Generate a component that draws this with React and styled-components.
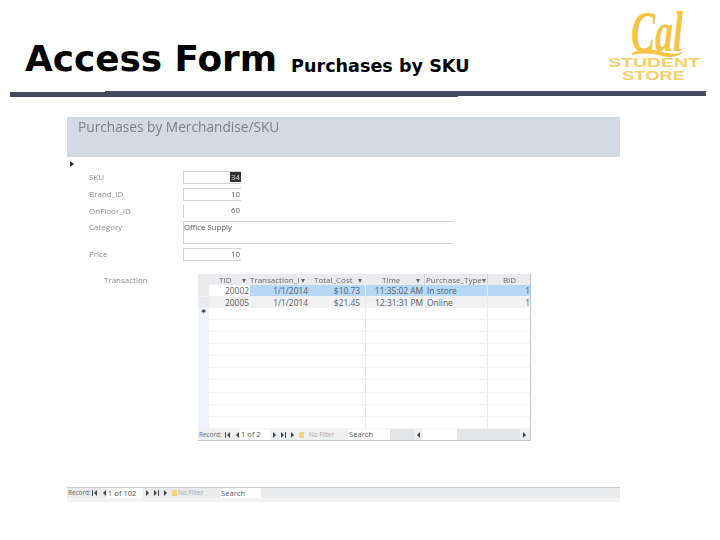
import React from "react";
import styled, { createGlobalStyle } from "styled-components";

const Global = createGlobalStyle`
  html, body { margin: 0; padding: 0; background: #fff; }
  #root { width: 720px; height: 540px; overflow: hidden; }
  * { box-sizing: border-box; }
`;
const Slide = styled.div`
  width: 720px; height: 540px; display: flex; flex-direction: column; background: #fff;
  font-family: "DejaVu Sans", sans-serif;
`;
const Header = styled.header`
  height: 91px; display: flex; align-items: flex-start; padding-left: 25px;
`;
const Title = styled.h1`
  margin: 36px 0 0; font: 700 35.8px/46px "DejaVu Sans", sans-serif; color: #000; white-space: nowrap;
`;
const Subtitle = styled.h2`
  margin: 55px 0 0 14px; font: 700 17.6px/22px "DejaVu Sans", sans-serif; color: #000; white-space: nowrap;
`;
const LogoBox = styled.svg`
  margin: 0 16px 0 auto; width: 100px; height: 91px; flex: none; overflow: visible;
`;
const Rule = styled.div`
  display: flex; align-items: flex-start; margin-left: 10px; width: 696px; height: 6px;
`;
const RuleSeg = styled.div`
  width: ${p => p.$w}px; height: ${p => p.$h}px; margin-top: ${p => p.$top}px; background: #434a62;
`;
const Form = styled.section`
  margin: 20px 0 0 67px; width: 553px; display: flex; flex-direction: column; filter: blur(0.4px);
`;
const FormHeader = styled.div`
  height: 40px; background: #d3dae4; padding: 1px 0 0 11px;
  font: 400 13.7px/18px "Open Sans", sans-serif; color: #7b7f86;
`;
const FormBody = styled.div`
  height: 330px; display: flex; flex-direction: column; padding: 4px 0 0 3px;
`;
const Selector = styled.div`
  width: 0; height: 0; border-left: 4px solid #222; border-top: 3px solid transparent; border-bottom: 3px solid transparent;
`;
const Fields = styled.div`
  margin-top: 4px; display: grid; grid-template-columns: 94px auto; justify-content: start; padding-left: 19px;
`;
const Label = styled.div`
  height: ${p => p.$h || 13}px; margin-bottom: ${p => p.$mb ?? 4}px;
  font: 400 8px/11px "Open Sans", sans-serif; color: #8a8a8a;
`;
const Input = styled.div`
  width: ${p => p.$w || 58}px; height: ${p => p.$h || 13}px; margin-bottom: ${p => p.$mb ?? 4}px;
  border: 1px solid #d2d2d2; border-right: none;
  ${p => p.$noEdge ? "border-top: none; border-bottom: none;" : ""}
  font: 400 7.8px/10px "Open Sans", sans-serif; color: #555; text-align: ${p => p.$left ? "left" : "right"};
  padding-right: 1px;
`;
const Selected = styled.span`
  background: #333; color: #ddd; display: inline-block; padding: 0 1px; margin-right: -1px;
`;
const SubRow = styled.div`
  display: flex; margin-top: 13px; padding-left: 34px;
`;
const SubLabel = styled.div`
  width: 94px; font: 400 8px/12px "Open Sans", sans-serif; color: #8b8b8b;
`;
const Sub = styled.div`
  width: 333px; height: 167px; display: flex; flex-direction: column; border-right: 1px solid #c4c4c4; border-bottom: 1px solid #c4c4c4;
`;
const COLS = "11px 41px 63px 53px 59px 63px 43px";
const HeadRow = styled.div`
  display: grid; grid-template-columns: ${COLS}; height: 11px; background: #e9ebee;
`;
const HeadCell = styled.div`
  font: 400 8px/11px "Open Sans", sans-serif; color: #666; white-space: nowrap; overflow: hidden;
  display: flex; justify-content: ${p => p.$center ? "center" : "space-between"};
  padding: 0 ${p => p.$pr ?? 3}px 0 ${p => p.$pl ?? 3}px;
  border-right: ${p => p.$sep ? "1px solid #d4d4d4" : "none"};
`;
const Grid = styled.div`
  flex: 1; display: flex; flex-direction: column; overflow: hidden;
`;
const Row = styled.div`
  display: grid; grid-template-columns: ${COLS}; height: ${p => p.$h || 11.5}px; border-bottom: 1px solid #f3f3f3;
  background: ${p => p.$alt ? "#f1f1f1" : "#fff"};
`;
const Sel = styled.div`
  background: ${p => p.$dark ? "#e9ebee" : "#f0f3f9"}; font: 700 9px/11px "DejaVu Sans", sans-serif; color: #333; text-align: center;
`;
const Cell = styled.div`
  font: 400 8.4px/11px "Open Sans", sans-serif; color: #5c5c5c; white-space: nowrap;
  padding: 0 ${p => p.$pr ?? 1}px 0 ${p => p.$left ? 2 : 0}px;
  text-align: ${p => p.$left ? "left" : "right"};
  background: ${p => p.$hi ? "#b6d7f6" : "transparent"};
  border-right: ${p => p.$sep ? "1px solid #e9e9e9" : "none"};
`;
const Nav = styled.div`
  height: 11px; display: flex; align-items: center; background: #eeeff1;
  font: 400 6.4px/10px "Open Sans", sans-serif; color: #666; white-space: nowrap;
`;
const NavInput = styled.div`
  width: ${p => p.$w}px; height: 100%; background: #fff; padding-left: 1px; flex: none;
  margin: 0 ${p => p.$mr || 0}px 0 ${p => p.$ml || 0}px; color: #555; line-height: 10px; font-size: 7.6px;
`;
const NavText = styled.span`
  width: ${p => p.$w}px; flex: none; padding-left: ${p => p.$pl || 1}px; color: ${p => p.$soft ? "#aaa" : "#666"};
`;
const IconSvg = styled.svg`
  width: ${p => p.$w}px; height: 6px; flex: none; fill: #444;
`;
const NewRec = styled.span`
  display: inline-block; flex: none; width: 5px; height: 6px; background: #f2d67a; margin-left: 1px;
`;
const Footer = styled.div`
  height: 15px; display: flex; flex-direction: column; border-top: 1px solid #cfcfcf; background: #f3f3f3;
`;
const FooterBar = styled(Nav)`
  height: 10px; background: #e9eaec;
`;
const Gap = styled.div`
  flex: ${p => p.$w ? `0 0 ${p.$w}px` : 1}; height: 100%; background: ${p => p.$dark ? "#e3e4e6" : "transparent"};
`;

const First = () => <IconSvg $w={9} viewBox="0 0 9 6"><rect x="1" width="1" height="6" /><path d="M6 0v6L3 3z" /></IconSvg>;
const Prev = () => <IconSvg $w={9} viewBox="0 0 9 6"><path d="M6 0v6L3 3z" /></IconSvg>;
const Next = () => <IconSvg $w={10} viewBox="0 0 10 6"><path d="M3 0v6l3-3z" /></IconSvg>;
const Last = () => <IconSvg $w={8} viewBox="0 0 8 6"><path d="M1 0v6l3-3z" /><rect x="5" width="1" height="6" /></IconSvg>;

function Logo() {
  return (
    <LogoBox viewBox="0 0 100 91" aria-label="Cal Student Store">
      <text x="27" y="51" fontFamily="Liberation Serif, serif" fontStyle="italic" fontWeight="700" fontSize="56" fill="#f6c343" textLength="52" lengthAdjust="spacingAndGlyphs">Cal</text>
      <path d="M28 53 C40 47 52 50 62 53 C68 54.5 74 54 80 51 C75 57 66 58 58 56 C46 53 38 53 28 55Z" fill="#f6c343" />
      <text x="4" y="67" fontFamily="Liberation Sans, sans-serif" fontWeight="700" fontSize="13.5" fill="#f6cf6a" textLength="92" lengthAdjust="spacingAndGlyphs">STUDENT</text>
      <text x="18" y="80" fontFamily="Liberation Sans, sans-serif" fontWeight="700" fontSize="13.5" fill="#f6cf6a" textLength="63" lengthAdjust="spacingAndGlyphs">STORE</text>
    </LogoBox>
  );
}

const rows = [
  { tid: "20002", date: "1/1/2014", cost: "$10.73", time: "11:35:02 AM", type: "In store", bid: "1", hi: true },
  { tid: "20005", date: "1/1/2014", cost: "$21.45", time: "12:31:31 PM", type: "Online", bid: "1", alt: true },
];
const heads = [
  { h: "TID", pl: 10, pr: 4 },
  { h: "Transaction_I", pl: 0, pr: 8 },
  { h: "Total_Cost", pl: 1, pr: 4 },
  { h: "Time", pl: 16, pr: 4, sep: true },
  { h: "Purchase_Type", pl: 1, pr: 3, sep: true },
  { h: "BID", center: true },
];

export default function App() {
  return (
    <Slide>
      <Global />
      <Header>
        <Title>Access Form</Title>
        <Subtitle>Purchases by SKU</Subtitle>
        <Logo />
      </Header>
      <Rule>
        <RuleSeg $w={95} $h={5} $top={1} />
        <RuleSeg $w={353} $h={6} $top={0} />
        <RuleSeg $w={248} $h={5} $top={0} />
      </Rule>
      <Form>
        <FormHeader>Purchases by Merchandise/SKU</FormHeader>
        <FormBody>
          <Selector />
          <Fields>
            <Label>SKU</Label><Input><Selected>34</Selected></Input>
            <Label>Brand_ID</Label><Input>10</Input>
            <Label $mb={3}>OnFloor_ID</Label><Input $noEdge $mb={3}>60</Input>
            <Label $h={23}>Category</Label><Input $w={270} $h={23} $left>Office Supply</Input>
            <Label $mb={0}>Price</Label><Input $mb={0}>10</Input>
          </Fields>
          <SubRow>
            <SubLabel>Transaction</SubLabel>
            <Sub>
              <HeadRow>
                <HeadCell />
                {heads.map(c => (
                  <HeadCell key={c.h} $sep={c.sep} $center={c.center} $pl={c.pl} $pr={c.pr}>
                    <span>{c.h}</span>{!c.center && <span>▾</span>}
                  </HeadCell>
                ))}
              </HeadRow>
              <Grid>
                {rows.map(r => (
                  <Row key={r.tid} $alt={r.alt}>
                    <Sel $dark />
                    <Cell>{r.tid}</Cell>
                    <Cell $hi={r.hi} $pr={5}>{r.date}</Cell>
                    <Cell $hi={r.hi} $pr={5} $sep>{r.cost}</Cell>
                    <Cell $hi={r.hi} $pr={2}>{r.time}</Cell>
                    <Cell $hi={r.hi} $left $sep>{r.type}</Cell>
                    <Cell $hi={r.hi}>{r.bid}</Cell>
                  </Row>
                ))}
                <Row><Sel>*</Sel><Cell /><Cell /><Cell $sep /><Cell /><Cell $sep /><Cell /></Row>
                {Array.from({ length: 9 }, (_, i) => (
                  <Row key={i} $h={12.3}><Sel /><Cell /><Cell /><Cell $sep /><Cell /><Cell $sep /><Cell /></Row>
                ))}
              </Grid>
              <Nav>
                <NavText $w={26}>Record:</NavText><First /><Prev />
                <NavInput $w={30} $ml={-2}>1 of 2</NavInput>
                <Next /><Last /><Next /><NewRec />
                <NavText $w={44} $pl={5} $soft>No Filter</NavText>
                <NavInput $w={42}>Search</NavInput>
                <Gap $w={24} $dark />
                <Prev />
                <NavInput $w={34} />
                <Gap $dark />
                <Next />
              </Nav>
            </Sub>
          </SubRow>
        </FormBody>
        <Footer>
          <FooterBar>
            <NavText $w={24}>Record:</NavText><First /><Prev />
            <NavInput $w={36} $ml={-2}>1 of 102</NavInput>
            <Next /><Last /><Next /><NewRec />
            <NavText $w={43} $pl={1} $soft>No Filter</NavText>
            <NavInput $w={41}>Search</NavInput>
          </FooterBar>
        </Footer>
      </Form>
    </Slide>
  );
}
